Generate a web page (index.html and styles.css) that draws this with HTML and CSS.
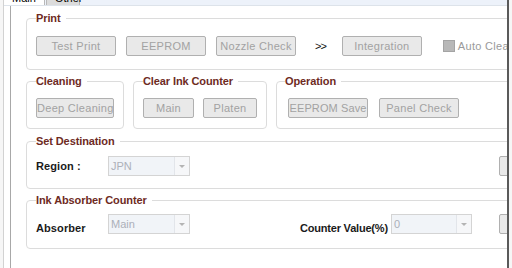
FILE: index.html
```html
<!DOCTYPE html>
<html lang="en">
<head>
    <meta charset="UTF-8">
    <meta name="viewport" content="width=device-width, initial-scale=1.0">
    <title>Service Tool - Main</title>
    <link rel="stylesheet" href="styles.css">
</head>
<body>

<div class="window">
    <div class="tabs">
        <span class="tab tab-active">Main</span>
        <span class="tab tab-other">Other</span>
    </div>

    <div class="page">
        <div class="content">

            <fieldset class="group group-print">
                <legend>Print</legend>
                <div class="row">
                    <button class="btn" disabled>Test Print</button>
                    <button class="btn" disabled>EEPROM</button>
                    <button class="btn" disabled>Nozzle Check</button>
                    <span class="next">&gt;&gt;</span>
                    <button class="btn" disabled>Integration</button>
                    <span class="check"><span class="check-box"></span>Auto Clear</span>
                </div>
            </fieldset>

            <div class="group-row">
                <fieldset class="group group-clean">
                    <legend>Cleaning</legend>
                    <div class="row">
                        <button class="btn btn-deep" disabled>Deep Cleaning</button>
                    </div>
                </fieldset>
                <fieldset class="group group-ink">
                    <legend>Clear Ink Counter</legend>
                    <div class="row row-tight">
                        <button class="btn btn-main" disabled>Main</button>
                        <button class="btn btn-platen" disabled>Platen</button>
                    </div>
                </fieldset>
                <fieldset class="group group-op">
                    <legend>Operation</legend>
                    <div class="row row-wide">
                        <button class="btn btn-save" disabled>EEPROM Save</button>
                        <button class="btn" disabled>Panel Check</button>
                    </div>
                </fieldset>
            </div>

            <fieldset class="group group-dest">
                <legend>Set Destination</legend>
                <div class="row">
                    <span class="field-label">Region :</span>
                    <div class="combo">
                        <span class="combo-value">JPN</span>
                        <span class="combo-arrow"></span>
                    </div>
                    <button class="btn btn-end" disabled>Set</button>
                </div>
            </fieldset>

            <fieldset class="group group-absorber">
                <legend>Ink Absorber Counter</legend>
                <div class="row">
                    <span class="field-label field-low">Absorber</span>
                    <div class="combo">
                        <span class="combo-value">Main</span>
                        <span class="combo-arrow"></span>
                    </div>
                    <span class="field-label field-low counter-label">Counter Value(%)</span>
                    <div class="combo combo-counter">
                        <span class="combo-value">0</span>
                        <span class="combo-arrow"></span>
                    </div>
                    <button class="btn btn-end" disabled>Set</button>
                </div>
            </fieldset>

        </div>
    </div>
</div>

</body>
</html>
```

FILE: styles.css
```css
body {
    margin: 0;
    width: 512px;
    height: 268px;
    overflow: hidden;
    background-color: #f6f6f6;
    font-family: "Liberation Sans", Arial, sans-serif;
    font-size: 11px;
}
.window {
    margin-left: 3px;
    width: 503px;
    height: 268px;
    border-left: 1px solid #d2d2d2;
    border-right: 2px solid #5a5a5a;
    background-color: #fff;
    display: flex;
    flex-direction: column;
}
.tabs {
    display: flex;
    align-items: flex-end;
    height: 5px;
    overflow: hidden;
    background-color: #edf2fa;
    border-bottom: 1px solid #dde3ea;
}
.tab {
    line-height: 14px;
    padding: 0 8px;
    color: #000;
    border-right: 1px solid #b8b8b8;
}
.tab-active {
    width: 24px;
    background-color: #fff;
}
.tab-other {
    margin-left: 1px;
    width: 16px;
    background-color: #dcdcdc;
    border-left: 1px solid #b8b8b8;
}
.page {
    flex: 1;
    margin-left: 6px;
    border-left: 1px solid #a8a8a8;
    padding-left: 15px;
    overflow: hidden;
}
.content {
    width: 563px;
    padding-top: 5px;
}
.group {
    margin: 0;
    min-width: 0;
    border: 1px solid #dcdcdc;
    border-radius: 4px;
    padding: 10px 9px 10px 9px;
}
.group legend {
    padding: 0 5px 0 0;
    font-weight: bold;
    font-size: 11px;
    line-height: 14px;
    color: #6e2b1f;
    letter-spacing: -0.1px;
}
.group-print {
    padding-top: 11px;
    padding-bottom: 13px;
}
.group-row {
    display: flex;
    gap: 9px;
    margin-top: 4px;
}
.group-clean {
    width: 98px;
    box-sizing: border-box;
}
.group-ink {
    width: 134px;
    box-sizing: border-box;
}
.group-op {
    flex: 1;
    padding-left: 11px;
}
.group-op legend {
    margin-left: -3px;
}
.group-dest {
    margin-top: 5px;
    padding-top: 8px;
    padding-bottom: 12px;
}
.group-absorber {
    margin-top: 4px;
    padding-top: 7px;
    padding-bottom: 14px;
}
.row {
    display: flex;
    align-items: center;
    gap: 10px;
    height: 20px;
}
.row-tight {
    gap: 9px;
}
.row-wide {
    gap: 11px;
}
.btn {
    width: 80px;
    height: 20px;
    padding: 0;
    box-sizing: border-box;
    border: 1px solid #b0b0b0;
    border-radius: 2px;
    background-color: #e9e9e9;
    color: #a2a2a2;
    font-family: inherit;
    font-size: 11px;
    letter-spacing: 0.3px;
    white-space: nowrap;
    overflow: hidden;
}
.btn-deep {
    width: 79px;
}
.btn-main {
    width: 52px;
}
.btn-platen {
    width: 55px;
}
.btn-save {
    letter-spacing: 0.1px;
}
.btn-end {
    margin-left: auto;
    color: transparent;
}
.next {
    margin-left: 9px;
    margin-right: 6px;
    color: #111;
    letter-spacing: -1px;
    font-size: 11px;
}
.check {
    display: flex;
    align-items: center;
    margin-left: 11px;
    color: #9a9a9a;
    letter-spacing: 0.3px;
    white-space: nowrap;
}
.check-box {
    width: 10px;
    height: 10px;
    margin-right: 3px;
    border: 1px solid #a4a4a4;
    background-color: #b8b8b8;
}
.field-label {
    width: 72px;
    flex: none;
    font-weight: bold;
    color: #1a1a1a;
    letter-spacing: 0.1px;
}
.field-low {
    padding-top: 7px;
}
.counter-label {
    width: auto;
    margin-left: 100px;
    letter-spacing: -0.2px;
}
.combo {
    display: flex;
    width: 82px;
    height: 20px;
    box-sizing: border-box;
    border: 1px solid #d4d4d4;
    background-color: #f1f4f8;
    margin-left: -10px;
}
.combo-counter {
    width: 81px;
    margin-left: -7px;
}
.combo-value {
    flex: 1;
    padding-left: 2px;
    line-height: 18px;
    color: #acb0b8;
}
.combo-arrow {
    width: 14px;
    border-left: 1px solid #e2e5ea;
    background-color: #f6f7f9;
    display: flex;
    align-items: center;
    justify-content: center;
}
.combo-arrow::after {
    content: "";
    border-left: 3px solid transparent;
    border-right: 3px solid transparent;
    border-top: 3px solid #b4b4b4;
}
```
